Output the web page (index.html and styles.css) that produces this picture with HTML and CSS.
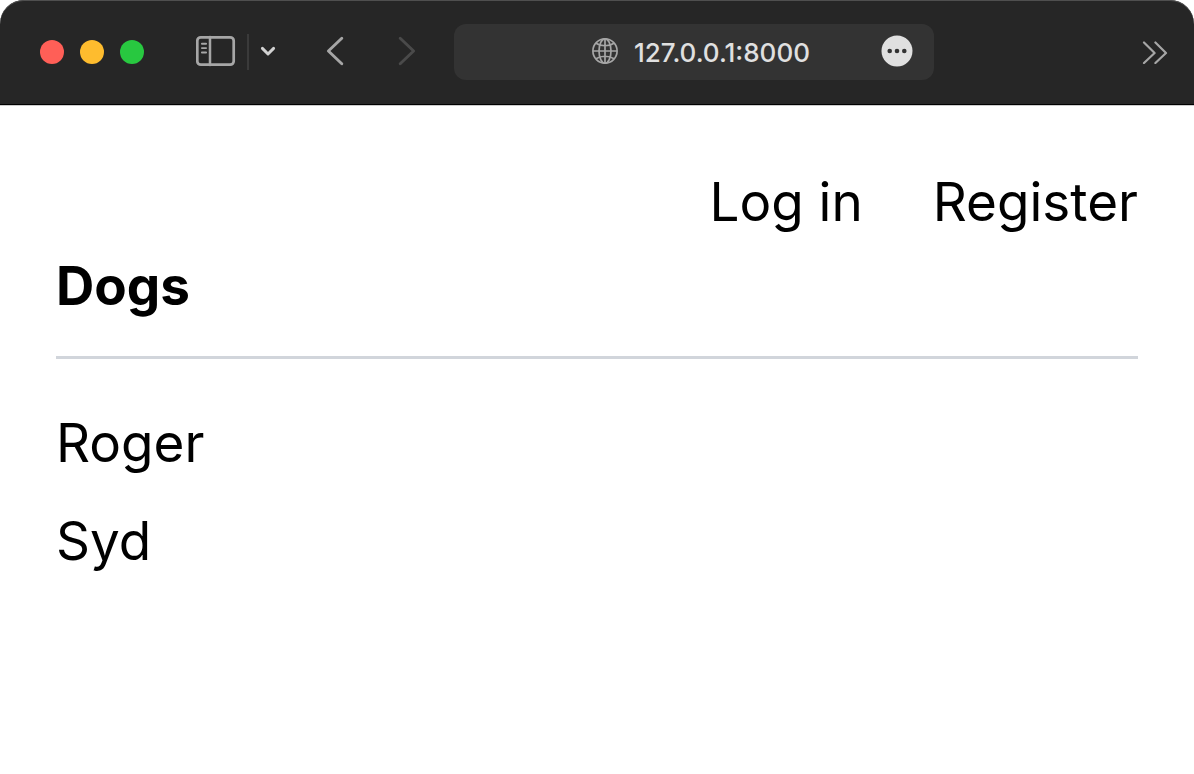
FILE: index.html
```html
<!DOCTYPE html>
<html lang="en">
<head>
    <meta charset="UTF-8">
    <meta name="viewport" content="width=device-width, initial-scale=1.0">
    <title>Dogs</title>
    <link rel="stylesheet" href="styles.css">
</head>
<body>
    <!-- Browser toolbar -->
    <header class="toolbar">
        <div class="lights">
            <button class="light red" aria-label="Close"></button>
            <button class="light yellow" aria-label="Minimize"></button>
            <button class="light green" aria-label="Zoom"></button>
        </div>
        <div class="sidebar-controls">
            <button class="icon-btn" aria-label="Show sidebar">
                <svg width="40" height="32" viewBox="0 0 40 32" fill="none" stroke="#a6a6a6" stroke-linecap="round">
                    <rect x="1.3" y="2.3" width="36.4" height="27.4" rx="3.5" stroke-width="2.7"/>
                    <path d="M14 2v28" stroke-width="2.5"/>
                    <path d="M5.9 8.7h4.2M5.9 13.1h4.2M5.9 17.5h4.2" stroke-width="1.9"/>
                </svg>
            </button>
            <span class="divider"></span>
            <button class="icon-btn" aria-label="Tab groups">
                <svg width="16" height="12" viewBox="0 0 16 12" fill="none" stroke="#d2d2d2" stroke-width="2.9" stroke-linecap="round" stroke-linejoin="round">
                    <path d="M2.4 3.4L8 9l5.6-5.6"/>
                </svg>
            </button>
        </div>
        <div class="history">
            <button class="icon-btn" aria-label="Back">
                <svg width="18" height="30" viewBox="0 0 18 30" fill="none" stroke="#a6a6a6" stroke-width="2.9" stroke-linecap="round" stroke-linejoin="round">
                    <path d="M15.8 2.2L2.4 15l13.4 12.8"/>
                </svg>
            </button>
            <button class="icon-btn" aria-label="Forward">
                <svg width="18" height="30" viewBox="0 0 18 30" fill="none" stroke="#4a4a4a" stroke-width="2.9" stroke-linecap="round" stroke-linejoin="round">
                    <path d="M2.2 2.2L15.6 15 2.2 27.8"/>
                </svg>
            </button>
        </div>
        <div class="address">
            <svg class="globe" width="26" height="26" viewBox="0 0 26 26" fill="none" stroke="#a6a6a6" stroke-width="1.7">
                <circle cx="13" cy="13" r="12.1"/>
                <ellipse cx="13" cy="13" rx="6" ry="12.1"/>
                <path d="M13 1v24M1 13h24M4 5.2c5 3.4 13 3.4 18 0M4 20.8c5-3.4 13-3.4 18 0"/>
            </svg>
            <input class="url" type="text" value="127.0.0.1:8000" aria-label="Address">
            <button class="icon-btn" aria-label="Page menu">
                <svg width="32" height="32" viewBox="0 0 32 32">
                    <circle cx="16" cy="16" r="15.5" fill="#e0e0e0"/>
                    <circle cx="8.7" cy="16" r="2.3" fill="#333"/>
                    <circle cx="16" cy="16" r="2.3" fill="#333"/>
                    <circle cx="23.3" cy="16" r="2.3" fill="#333"/>
                </svg>
            </button>
        </div>
        <button class="icon-btn more" aria-label="More">
            <svg width="26" height="24" viewBox="0 0 26 24" fill="none" stroke="#a6a6a6" stroke-width="2.2" stroke-linecap="round" stroke-linejoin="round">
                <path d="M2 2.5L12.6 13 2 23M13.4 2.5L24 13 13.4 23"/>
            </svg>
        </button>
    </header>

    <!-- Page content -->
    <main class="page">
        <nav class="user-nav">
            <a href="#">Log in</a>
            <a href="#">Register</a>
        </nav>
        <h1>Dogs</h1>
        <ul class="dogs">
            <li>Roger</li>
            <li>Syd</li>
        </ul>
    </main>
</body>
</html>
```

FILE: styles.css
```css
* {
    box-sizing: border-box;
}
body {
    font-family: Inter, "Liberation Sans", sans-serif;
    margin: 0;
    background-color: #fff;
    color: #000;
}
.toolbar {
    display: flex;
    align-items: center;
    padding: 24px 26px 24px 40px;
    background-color: #262626;
    border-bottom: 1px solid #000;
    border-radius: 24px 24px 0 0;
    box-shadow: inset 0 1px 0 #4f4f4f, 0 1px 0 #ccc;
}
.icon-btn {
    display: block;
    flex: none;
    padding: 0;
    border: none;
    background: none;
    cursor: pointer;
}
.icon-btn svg {
    display: block;
}
.lights {
    display: flex;
    gap: 16px;
}
.light {
    width: 24px;
    height: 24px;
    padding: 0;
    border: none;
    border-radius: 50%;
}
.red {
    background-color: #ff5f57;
}
.yellow {
    background-color: #febc2e;
}
.green {
    background-color: #28c840;
}
.sidebar-controls {
    display: flex;
    align-items: center;
    gap: 11px;
    height: 36px;
    margin-left: 52px;
}
.divider {
    width: 2px;
    height: 36px;
    background-color: #3a3a3a;
}
.sidebar-controls .icon-btn {
    padding-bottom: 2px;
}
.history {
    display: flex;
    gap: 54px;
    margin-left: 50px;
    padding-bottom: 2px;
}
.address {
    flex: 1;
    display: flex;
    align-items: center;
    height: 56px;
    margin: 0 208px 0 38px;
    padding: 0 21px 2px;
    background-color: #333;
    border-radius: 12px;
}
.globe {
    flex: none;
    margin-left: auto;
}
.url {
    width: 187px;
    height: 32px;
    margin: 2px 60px 0 16px;
    padding: 0;
    border: none;
    background: none;
    color: #e0e0e0;
    font-family: inherit;
    font-size: 26px;
    font-weight: 500;
}
.page {
    padding: 55px 56px;
    font-size: 53px;
    line-height: 84px;
}
.user-nav {
    display: flex;
    justify-content: flex-end;
    gap: 70px;
}
.user-nav a {
    color: inherit;
    text-decoration: none;
}
h1 {
    margin: 0;
    padding-bottom: 28px;
    border-bottom: 3px solid #d1d5db;
    font-size: inherit;
    font-weight: 700;
}
.dogs {
    display: flex;
    flex-direction: column;
    gap: 14px;
    margin: 42px 0 0;
    padding: 0;
    list-style: none;
}
```
